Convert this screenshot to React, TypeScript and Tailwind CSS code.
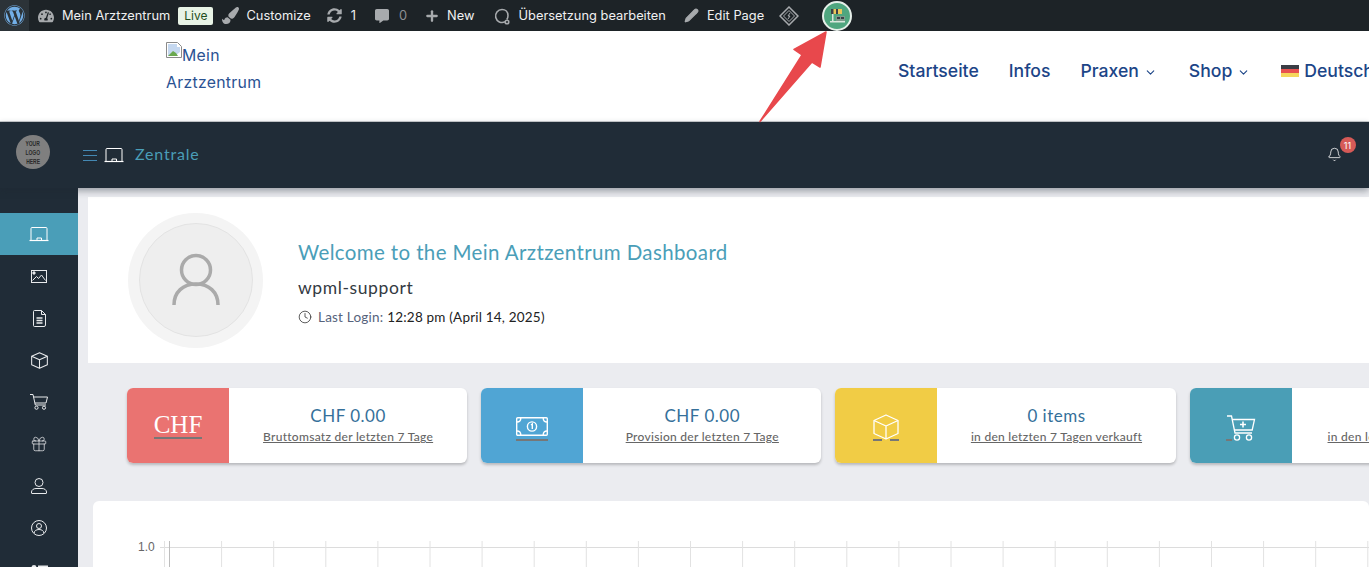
import type { ReactNode } from "react";
import { ChevronDown, Clock, Gift, Pencil, Plus, Bell } from "lucide-react";
import { FaWordpress, FaPaintBrush, FaSyncAlt, FaCommentAlt, FaTachometerAlt } from "react-icons/fa";

function ScreenIcon({ size = 20 }: { size?: number }) {
  return (
    <svg width={size} height={size} viewBox="0 0 20 20" fill="none" stroke="currentColor" strokeWidth="1">
      <path d="M2 16V4.500a1 1 0 0 1 1-1h14a1 1 0 0 1 1 1V16" />
      <path d="M0.500 16.500h19" strokeWidth="1.200" />
      <path d="M8 16v-2h4.500v2" />
    </svg>
  );
}

function CashIcon() {
  return (
    <svg width="32" height="19" viewBox="0 0 32 19" fill="none" stroke="white" strokeWidth="1.400">
      <rect x="0.700" y="0.700" width="30.600" height="17.600" rx="1" />
      <circle cx="16" cy="9.500" r="4.600" />
      <path d="M15 8l1.300-1v5" />
      <path d="M1 5c2.500 0 3.800-1.500 3.800-4M31 5c-2.500 0-3.800-1.500-3.800-4M1 14c2.500 0 3.800 1.500 3.800 4M31 14c-2.500 0-3.800 1.500-3.800 4" />
    </svg>
  );
}

function CartPlusIcon() {
  return (
    <svg width="30" height="27" viewBox="0 0 30 27" fill="none" stroke="white" strokeWidth="1.300">
      <path d="M1 1h4.500l3.500 17h17" />
      <path d="M6.300 4.500h22.200l-2.300 10.500H8.400" />
      <path d="M17 6.500v6M14 9.500h6" strokeWidth="1.600" />
      <circle cx="11" cy="22.500" r="2.600" />
      <circle cx="23" cy="22.500" r="2.600" />
    </svg>
  );
}

function CubeIcon({ size = 26, width = 1.300 }: { size?: number; width?: number }) {
  return (
    <svg width={size} height={size} viewBox="0 0 26 26" fill="none" stroke="currentColor" strokeWidth={width} strokeLinejoin="round">
      <path d="M13 1L25 6.500V19.500L13 25L1 19.500V6.500z" />
      <path d="M1 6.500L13 12L25 6.500M13 12V25" />
    </svg>
  );
}

function SideImage() {
  return (
    <svg width="16" height="13" viewBox="0 0 16 13" fill="none" stroke="currentColor">
      <rect x="0.500" y="0.500" width="15" height="12" />
      <circle cx="3" cy="3" r="1.200" fill="currentColor" />
      <path d="M1.500 10.500l4-4 2 2 3-3.500 4 5.500" />
    </svg>
  );
}

function SideDoc() {
  return (
    <svg width="13" height="17" viewBox="0 0 13 17" fill="none" stroke="currentColor">
      <path d="M1.500 0.500h7l4 4v10.500a1.500 1.500 0 0 1-1.500 1.500H1.500a1 1 0 0 1-1-1V1.500a1 1 0 0 1 1-1z" />
      <path d="M8.500 0.500v4h4" />
      <path d="M3.500 8h6M3.500 10.500h6M3.500 13h6" strokeWidth="1.300" />
    </svg>
  );
}

function SideCart() {
  return (
    <svg width="18" height="16" viewBox="0 0 18 16" fill="none" stroke="currentColor">
      <path d="M0 0.500h3l2.300 10.500h10.700" />
      <path d="M3.600 3h13.900l-1.500 6H4.800" />
      <circle cx="6.500" cy="13.700" r="1.600" />
      <circle cx="14" cy="13.700" r="1.600" />
    </svg>
  );
}

function SideUser() {
  return (
    <svg width="16" height="16" viewBox="0 0 16 16" fill="none" stroke="currentColor">
      <circle cx="8" cy="4.500" r="4" />
      <path d="M1 15.500h14a0.500 0.500 0 0 0 .5-.5v-1c0-2-2-3.500-4.500-3.500H5c-2.500 0-4.500 1.500-4.500 3.500v1a.5.5 0 0 0 .5.5z" />
    </svg>
  );
}

function SideAccount() {
  return (
    <svg width="16" height="16" viewBox="0 0 16 16" fill="none" stroke="currentColor">
      <circle cx="8" cy="8" r="7.500" />
      <circle cx="8" cy="6" r="2.500" />
      <path d="M3.200 13c0-2 1.800-3.500 4.800-3.500s4.800 1.500 4.800 3.500" />
    </svg>
  );
}

function SideList() {
  return (
    <svg width="17" height="14" viewBox="0 0 17 14" fill="currentColor">
      <circle cx="3" cy="2.500" r="2.500" />
      <rect x="7" y="0.500" width="10" height="4" />
      <rect x="0" y="7" width="17" height="1" />
    </svg>
  );
}

const sideIcons = [
  <SideImage key="image" />,
  <SideDoc key="doc" />,
  <CubeIcon key="box" size={17} width={1.600} />,
  <SideCart key="cart" />,
  <Gift key="gift" size={18} strokeWidth={1} />,
  <SideUser key="user" />,
  <SideAccount key="account" />,
  <span key="list" className="pt-[3px]"><SideList /></span>,
];

function AdminText({ children, className = "" }: { children: ReactNode; className?: string }) {
  return <span className={`whitespace-nowrap text-[12.85px] text-[#f0f0f1] ${className}`}>{children}</span>;
}

function StatCard({ color, icon, value, label }: { color: string; icon: ReactNode; value: string; label: string }) {
  return (
    <div className="flex h-[75px] w-[340.2px] shrink-0 overflow-hidden rounded-md bg-white shadow-[0_2px_3px_rgba(0,0,0,0.22)]">
      <div className={`flex w-[102px] shrink-0 items-center justify-center ${color}`}>{icon}</div>
      <div className="flex flex-1 flex-col items-center pt-[17px] font-['Lato',sans-serif]">
        <div className="text-[17px] leading-[22px] tracking-[0.5px] text-[#35709a]">{value}</div>
        <div className="mt-[2px] text-[12px] font-medium leading-[16px] tracking-[0.28px] text-[#666] underline">{label}</div>
      </div>
    </div>
  );
}

export default function App() {
  const grid = Array.from({ length: 24 }, (_, i) => 76.5 + i * 52.1);
  return (
    <div className="relative h-[567px] w-[1369px] overflow-hidden bg-[#ebecf0] font-['Inter',sans-serif]">
      {/* admin bar */}
      <div className="flex h-[31px] items-center bg-[#1d2327]">
        <div className="flex h-full w-[29px] items-center justify-center bg-[#2c3338]">
          <FaWordpress className="text-[21px] text-[#72aee6]" />
        </div>
        <FaTachometerAlt className="ml-[9px] text-[16px] text-[#a7aaad]" />
        <AdminText className="ml-[8px]">Mein Arztzentrum</AdminText>
        <span className="ml-[8px] rounded-[2px] bg-[#e8f3e6] px-[6px] text-[12px] leading-[18px] text-[#1e4d20]">Live</span>
        <FaPaintBrush className="ml-[9px] text-[17px] text-[#a7aaad]" />
        <AdminText className="ml-[7px]">Customize</AdminText>
        <FaSyncAlt className="ml-[16px] text-[15px] text-[#a7aaad]" />
        <AdminText className="ml-[9px]">1</AdminText>
        <FaCommentAlt className="ml-[19px] text-[14px] text-[#a7aaad]" />
        <AdminText className="ml-[10px] !text-[#8c8f94]">0</AdminText>
        <Plus className="ml-[17px] text-[#a7aaad]" size={16} strokeWidth={3.5} />
        <AdminText className="ml-[7px]">New</AdminText>
        <svg className="ml-[18px]" width="20" height="20" viewBox="0 0 20 20" fill="none" stroke="#a7aaad" strokeWidth="1.600">
          <path d="M9 3.500a6.500 6.500 0 1 0 3 12.300" />
          <path d="M9 3.500c3.500 0 6 2.400 6 6 0 1.600-.4 3-1.200 4" />
          <circle cx="14" cy="16" r="1.800" />
        </svg>
        <AdminText className="ml-[6px]">Übersetzung bearbeiten</AdminText>
        <Pencil className="ml-[18px] text-[#a7aaad]" size={15} fill="#a7aaad" />
        <AdminText className="ml-[8px]">Edit Page</AdminText>
        <svg className="ml-[15px]" width="20" height="20" viewBox="0 0 20 20" fill="none" stroke="#a7aaad">
          <path d="M10 1l9 9-9 9-9-9z" strokeWidth="1.500" />
          <path d="M10 4.500l5.500 5.500-5.500 5.500-5.500-5.500z" />
          <path d="M11 7l-2 3h2l-2 3" />
        </svg>
        <div className="ml-[23px] flex h-[30px] w-[30px] items-center justify-center rounded-full border-2 border-[#e6efe9] bg-[#4fa67f]">
          <svg width="17" height="14" viewBox="0 0 17 14">
            <rect x="2" y="0" width="11" height="5" fill="#e9c65a" />
            <rect x="2" y="0" width="2.500" height="5" fill="#3c4046" />
            <rect x="7" y="0" width="2" height="5" fill="#3c4046" />
            <rect x="3" y="5" width="1.500" height="8" fill="#d9e6dc" />
            <rect x="1" y="12" width="15" height="1.500" fill="#d9e6dc" />
            <rect x="7" y="7" width="9" height="5" fill="#7f9c8d" />
            <rect x="8" y="8" width="3" height="2" fill="#3c4046" />
            <rect x="12" y="8" width="3" height="2" fill="#3c4046" />
          </svg>
        </div>
      </div>

      {/* site header */}
      <div className="flex h-[91px] border-b border-[#c9ccce] bg-white text-[#1c4587]">
        <div className="ml-[166px] mt-[11px] w-[110px] shrink-0 text-[15.8px] leading-[27px] tracking-[0.3px] text-[#2a5293]">
          <svg className="inline-block align-top" width="16" height="16" viewBox="0 0 16 16">
            <path d="M0.500 0.500h11l4 4v11h-15z" fill="#fff" stroke="#8a8a8a" />
            <path d="M2 2h9v3h3v5l-5 4H2z" fill="#c5d8f0" />
            <path d="M2 14l5-5 3 2 2 3z" fill="#6aa84f" />
          </svg>
          Mein Arztzentrum
        </div>
        <nav className="ml-[622px] mt-[29px] flex h-[22px] shrink-0 items-center whitespace-nowrap text-[17.6px] font-medium leading-[22px]">
          <span>Startseite</span>
          <span className="ml-[30px]">Infos</span>
          <span className="ml-[30px]">Praxen</span>
          <ChevronDown className="ml-[5px] mt-[3px] shrink-0" size={13} strokeWidth={2} />
          <span className="ml-[32px]">Shop</span>
          <ChevronDown className="ml-[5px] mt-[3px] shrink-0" size={13} strokeWidth={2} />
          <span className="ml-[31px] flex h-[12px] w-[18px] shrink-0 flex-col">
            <i className="h-1/3 bg-[#3a3d45]" />
            <i className="h-1/3 bg-[#e8514f]" />
            <i className="h-1/3 bg-[#f5d75c]" />
          </span>
          <span className="ml-[5px]">Deutsch</span>
        </nav>
      </div>

      {/* dashboard header */}
      <div className="relative z-10 flex h-[66px] items-center bg-[#202c37] shadow-[0_3px_7px_rgba(30,40,50,0.4)]">
        <div className="ml-[16px] flex h-[34px] w-[34px] -translate-y-[3px] flex-col items-center justify-center rounded-full bg-[#7f7f7f] text-center font-['Liberation_Sans',sans-serif] text-[8px] font-bold leading-[9px] text-[#2a2a2a]">
          <span className="scale-x-[0.62]">YOUR</span>
          <span className="scale-x-[0.62]">LOGO</span>
          <span className="scale-x-[0.62]">HERE</span>
        </div>
        <span className="ml-[33px] flex w-[14px] flex-col gap-[4px]">
          <i className="h-[1px] bg-[#4488b3]" />
          <i className="h-[1px] bg-[#4488b3]" />
          <i className="h-[1px] bg-[#4488b3]" />
        </span>
        <span className="ml-[7px] text-white">
          <ScreenIcon />
        </span>
        <span className="ml-[11px] -translate-y-[1px] font-['Lato',sans-serif] text-[16px] tracking-[0.8px] text-[#4a9eb8]">Zentrale</span>
        <div className="relative ml-[1127px] h-[16px] text-white">
          <Bell size={15} strokeWidth={1.25} />
          <span className="absolute -right-[14px] -top-[10px] flex h-[16px] w-[16px] items-center justify-center rounded-full bg-[#d65a57] text-[9px] leading-none">11</span>
        </div>
      </div>

      <div className="flex h-[379px]">
        {/* sidebar */}
        <aside className="w-[78px] shrink-0 bg-[#202c37] pt-[25px] text-[#e8eaec]">
          <div className="flex h-[42px] items-center justify-center bg-[#4a9eb8] text-white">
            <ScreenIcon />
          </div>
          {sideIcons.map((icon, i) => (
            <div key={i} className="flex h-[42px] items-center justify-center">
              {icon}
            </div>
          ))}
        </aside>

        <main className="min-w-0 flex-1 overflow-hidden">
          {/* welcome */}
          <section className="ml-[10px] mt-[9px] flex h-[166px] items-center bg-white">
            <div className="ml-[40px] flex h-[135px] w-[135px] shrink-0 items-center justify-center rounded-full bg-[#f4f4f4]">
              <div className="flex h-[114px] w-[114px] items-center justify-center rounded-full border border-[#e3e3e3] bg-[#eeeeee]">
                <svg width="48" height="54" viewBox="0 0 48 54" fill="none" stroke="#aaaaaa" strokeWidth="3.500">
                  <circle cx="24" cy="17" r="14.500" />
                  <path d="M2 52c0-13 9-21 22-21s22 8 22 21" />
                </svg>
              </div>
            </div>
            <div className="ml-[35px] pt-[4px] font-['Lato',sans-serif]">
              <h1 className="text-[20.5px] leading-[28px] tracking-[0.37px] text-[#4a9eb8]">Welcome to the Mein Arztzentrum Dashboard</h1>
              <div className="mt-[10px] text-[17.5px] leading-[24px] tracking-[0.6px] text-[#333a42]">wpml-support</div>
              <div className="mt-[8px] flex items-center text-[13.5px] leading-[18px] tracking-[0.2px]">
                <Clock className="text-[#222]" size={14} strokeWidth={1.25} />
                <span className="ml-[6px] text-[#56637c]">Last Login:</span>
                <span className="ml-[4px] text-[#222]">12:28 pm (April 14, 2025)</span>
              </div>
            </div>
          </section>

          {/* stats */}
          <section className="ml-[49px] mt-[25px] flex gap-[14px]">
            <StatCard
              color="bg-[#ea7371]"
              icon={
                <span className="mt-[1px] flex flex-col items-center">
                  <span className="font-['Liberation_Serif',serif] text-[25px] leading-[24px] text-white">CHF</span>
                  <i className="h-[2px] w-full bg-[#777]" />
                </span>
              }
              value="CHF 0.00"
              label="Bruttomsatz der letzten 7 Tage"
            />
            <StatCard
              color="bg-[#50a5d4]"
              icon={
                <span className="mt-[7px] flex flex-col items-center gap-[3px]">
                  <CashIcon />
                  <i className="h-[2px] w-full bg-[#777]" />
                </span>
              }
              value="CHF 0.00"
              label="Provision der letzten 7 Tage"
            />
            <StatCard
              color="bg-[#f1cc45]"
              icon={
                <span className="relative mt-[4px] block pb-[1px] text-white">
                  <CubeIcon />
                  <i className="absolute bottom-0 left-0 h-[2px] w-[9px] bg-[#777]" />
                  <i className="absolute bottom-0 right-0 h-[2px] w-[9px] bg-[#777]" />
                </span>
              }
              value="0 items"
              label="in den letzten 7 Tagen verkauft"
            />
            <StatCard
              color="bg-[#4a9eb6]"
              icon={
                <span className="relative mt-[5px] block">
                  <CartPlusIcon />
                  <i className="absolute bottom-[1px] left-0 h-[2px] w-[6px] bg-[#777]" />
                </span>
              }
              value="0 items"
              label="in den letzten 7 Tagen bestellt"
            />
          </section>

          {/* chart */}
          <section className="ml-[15px] mt-[38px] h-[80px] rounded-t-md bg-white">
            <svg width="1276" height="66" viewBox="0 0 1276 66">
              <text x="45" y="50" fontSize="12" fill="#666" fontFamily="Liberation Sans, sans-serif">1.0</text>
              <path d="M67 46.500H1276" stroke="#dcdcdc" />
              <path d="M71.500 40V66" stroke="#e2e2e2" />
              {grid.map((x, i) => (
                <path key={x} d={`M${x} 40V66`} stroke={i === 0 ? "#bdbdbd" : "#e2e2e2"} />
              ))}
            </svg>
          </section>
        </main>
      </div>

      {/* annotation arrow */}
      <svg className="pointer-events-none absolute left-[750px] top-[25px] z-20" width="90" height="100" viewBox="750 25 90 100">
        <path d="M826 32L794 49.500L802 55L760 121.500L812 62L820 67z" fill="#e8484c" stroke="#e8484c" strokeWidth="1.500" strokeLinejoin="round" />
      </svg>
    </div>
  );
}
